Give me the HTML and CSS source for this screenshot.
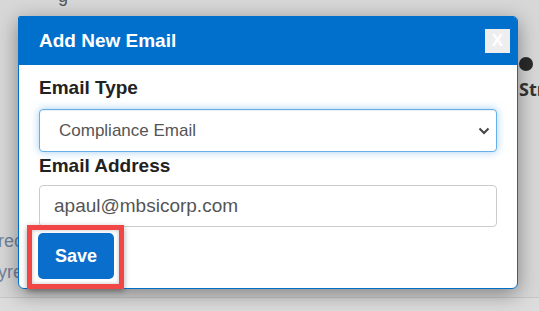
FILE: index.html
```html
<!DOCTYPE html>
<html>
<head>
	<meta charset="UTF-8">
	<title>Add New Email</title>
	<link rel="stylesheet" href="styles.css">
</head>
<body>
	<main class="page">
		<div class="page-left">
			<p class="page-link">rec</p>
			<p class="page-link">yre</p>
		</div>
		<div class="page-mid">
			<span class="page-frag">g</span>
		</div>
		<div class="page-right">
			<span class="bullet"></span>
			<p class="page-strong">Str</p>
		</div>
		<div class="page-foot"></div>
	</main>

	<div class="modal">
		<header class="modal-head">
			<h2 class="modal-title">Add New Email</h2>
			<button class="modal-close" type="button">X</button>
		</header>

		<form class="modal-body">
			<label class="field-label" for="emailType">Email Type</label>
			<div class="select-wrap">
				<select id="emailType" class="field field-select">
					<option>Compliance Email</option>
				</select>
				<svg class="chevron" width="12" height="8" viewBox="0 0 12 8">
					<path d="M1.5 1.5 L6 6 L10.5 1.5" fill="none" stroke="#444" stroke-width="2"/>
				</svg>
			</div>

			<label class="field-label label-second" for="emailAddress">Email Address</label>
			<input id="emailAddress" class="field field-input" type="text" value="apaul@mbsicorp.com">

			<button class="btn-save" type="button">Save</button>
		</form>
	</div>

	<div class="highlight"></div>
</body>
</html>
```

FILE: styles.css
```css
body { margin: 0; font-family: "Liberation Sans", Arial, sans-serif; background: #d7d7d7; overflow: hidden; }

/* page behind the dialog */
.page { display: grid; grid-template-columns: 18px 500px 21px; grid-template-rows: 297px 14px; height: 311px; }
.page p { margin: 0; }
.page-left { overflow: hidden; padding-top: 226px; }
.page-link { font-size: 18px; line-height: 31px; color: #70829b; white-space: nowrap; margin-left: -2px !important; }
.page-mid { overflow: hidden; padding-left: 40px; }
.page-frag { display: block; margin-top: -14px; font-size: 18px; color: #555; }
.page-right { overflow: hidden; padding-top: 57px; padding-left: 1px; }
.bullet { display: block; width: 14px; height: 14px; border-radius: 50%; background: #2a2a2a; }
.page-strong { font-family: "Open Sans", sans-serif; font-weight: 700; font-size: 18px; line-height: 20px; color: #333; margin-top: 8px !important; white-space: nowrap; }
.page-foot { grid-column: 1 / 4; border-top: 1px solid #c6c6c6; background: #dcdcdc; }

/* dialog */
.modal {
	position: absolute; left: 18px; top: 16px; width: 498px;
	background: #fff; border: 1px solid #0070cc; border-radius: 2px 5px 6px 6px;
	box-shadow: 0 5px 20px rgba(0, 0, 0, 0.4);
}
.modal-head {
	display: flex; align-items: center; justify-content: space-between;
	height: 48px; padding: 0 7px 0 20px; background: #0070cc; border-radius: 1px 4px 0 0;
}
.modal-title { margin: 0; font-size: 19px; line-height: 22px; font-weight: bold; color: #fff; }
.modal-close {
	width: 25px; height: 24px; padding: 0; border: 0; background: #eeeeee;
	font-family: "Liberation Sans", Arial, sans-serif; font-size: 17px; font-weight: bold; color: #fff;
}

.modal-body { display: flex; flex-direction: column; padding: 11px 20px 9px; }
.field-label { font-size: 19px; line-height: 23px; font-weight: bold; color: #222; }
.label-second { margin-top: 2px; }

.select-wrap { position: relative; margin-top: 10px; }
.field {
	box-sizing: border-box; width: 458px; margin: 0; border-radius: 4px;
	font-family: "Liberation Sans", Arial, sans-serif; color: #555; background: #fff;
}
.field-select {
	appearance: none; -webkit-appearance: none; height: 43px; padding: 0 30px 0 19px;
	font-size: 17px; border: 1px solid #66afe9; outline: none;
	box-shadow: inset 0 1px 1px rgba(0, 0, 0, 0.075), 0 0 8px rgba(102, 175, 233, 0.6);
}
.chevron { position: absolute; right: 7px; top: 18px; }
.field-input { height: 42px; margin-top: 8px; padding: 0 14px; font-size: 19px; border: 1px solid #cccccc; }

.btn-save {
	align-self: flex-start; width: 76px; height: 46px; margin-top: 6px; margin-left: -1px;
	border: 0; border-radius: 5px; background: #0a6fcc; color: #fff;
	font-family: "Liberation Sans", Arial, sans-serif; font-size: 18px; font-weight: bold;
}

/* annotation box */
.highlight {
	position: absolute; left: 27px; top: 225px; width: 87px; height: 54px;
	border: 5px solid #f24646; box-shadow: 0 2px 6px rgba(0, 0, 0, 0.35), inset 0 0 4px rgba(0, 0, 0, 0.25);
}
```
